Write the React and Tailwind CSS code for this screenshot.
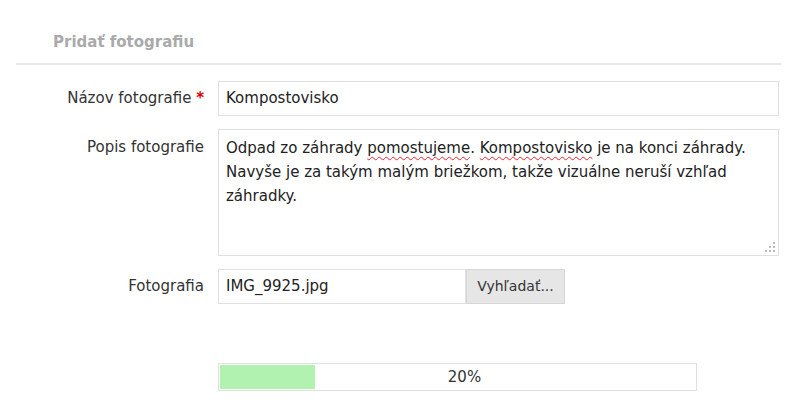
const FONT = "font-['DejaVu_Sans',sans-serif]"

function Label({ children, top }) {
  return (
    <div className={`w-[218px] shrink-0 pr-[14px] text-right text-[15px] text-[#333] ${top ? 'pt-[6px] leading-[24px]' : 'self-center'}`}>
      {children}
    </div>
  )
}

function Squiggle({ children }) {
  return <span className="underline decoration-wavy decoration-[#e23] decoration-1 underline-offset-[3px]">{children}</span>
}

export default function App() {
  return (
    <div className={`w-[800px] h-[405px] bg-white ${FONT} overflow-hidden`}>
      <div className="pt-[32px] pl-[53px] text-[15px] leading-[20px] font-bold text-[#aaa]">Pridať fotografiu</div>
      <div className="ml-[16px] mr-[19px] mt-[11px] h-[2px] bg-[#e8e8e8]" />

      <div className="mt-[16px] flex flex-col gap-[13px]">
        <div className="flex">
          <Label>
            Názov fotografie <span className="text-[#d00] font-bold">*</span>
          </Label>
          <div className="w-[561px] h-[35px] border border-[#e0e0e0] px-[7px] flex items-center text-[15px] text-[#222]">
            Kompostovisko
          </div>
        </div>

        <div className="flex">
          <Label top>Popis fotografie</Label>
          <div className="relative w-[561px] h-[127px] border border-[#e0e0e0] px-[7px] pt-[6px] text-[15px] leading-[24px] text-[#222]">
            Odpad zo záhrady <Squiggle>pomostujeme</Squiggle>. <Squiggle>Kompostovisko</Squiggle> je na konci záhrady.
            <br />
            Navyše je za takým malým briežkom, takže vizuálne neruší vzhľad
            <br />
            záhradky.
            <div className="absolute right-[3px] bottom-[3px] grid grid-cols-3 gap-[2px]">
              {[0, 0, 1, 0, 1, 1, 1, 1, 1].map((v, i) => (
                <span key={i} className={`w-[2px] h-[2px] ${v ? 'bg-[#bbb]' : ''}`} />
              ))}
            </div>
          </div>
        </div>

        <div className="flex">
          <Label>Fotografia</Label>
          <div className="flex h-[35px]">
            <div className="w-[248px] border border-[#e0e0e0] px-[7px] flex items-center text-[15px] text-[#222]">IMG_9925.jpg</div>
            <div className="w-[99px] border border-[#d6d6d6] bg-[#e6e6e6] flex items-center justify-center text-[14px] text-[#333]">
              Vyhľadať...
            </div>
          </div>
        </div>
      </div>

      <div className="ml-[218px] mt-[59px] w-[479px] h-[28px] border border-[#e0e0e0] p-[1px] relative">
        <div className="h-full w-[20%] bg-[#b1f2b1]" />
        <div className="absolute inset-0 pl-[14px] flex items-center justify-center text-[15px] text-[#333]">20%</div>
      </div>
    </div>
  )
}
